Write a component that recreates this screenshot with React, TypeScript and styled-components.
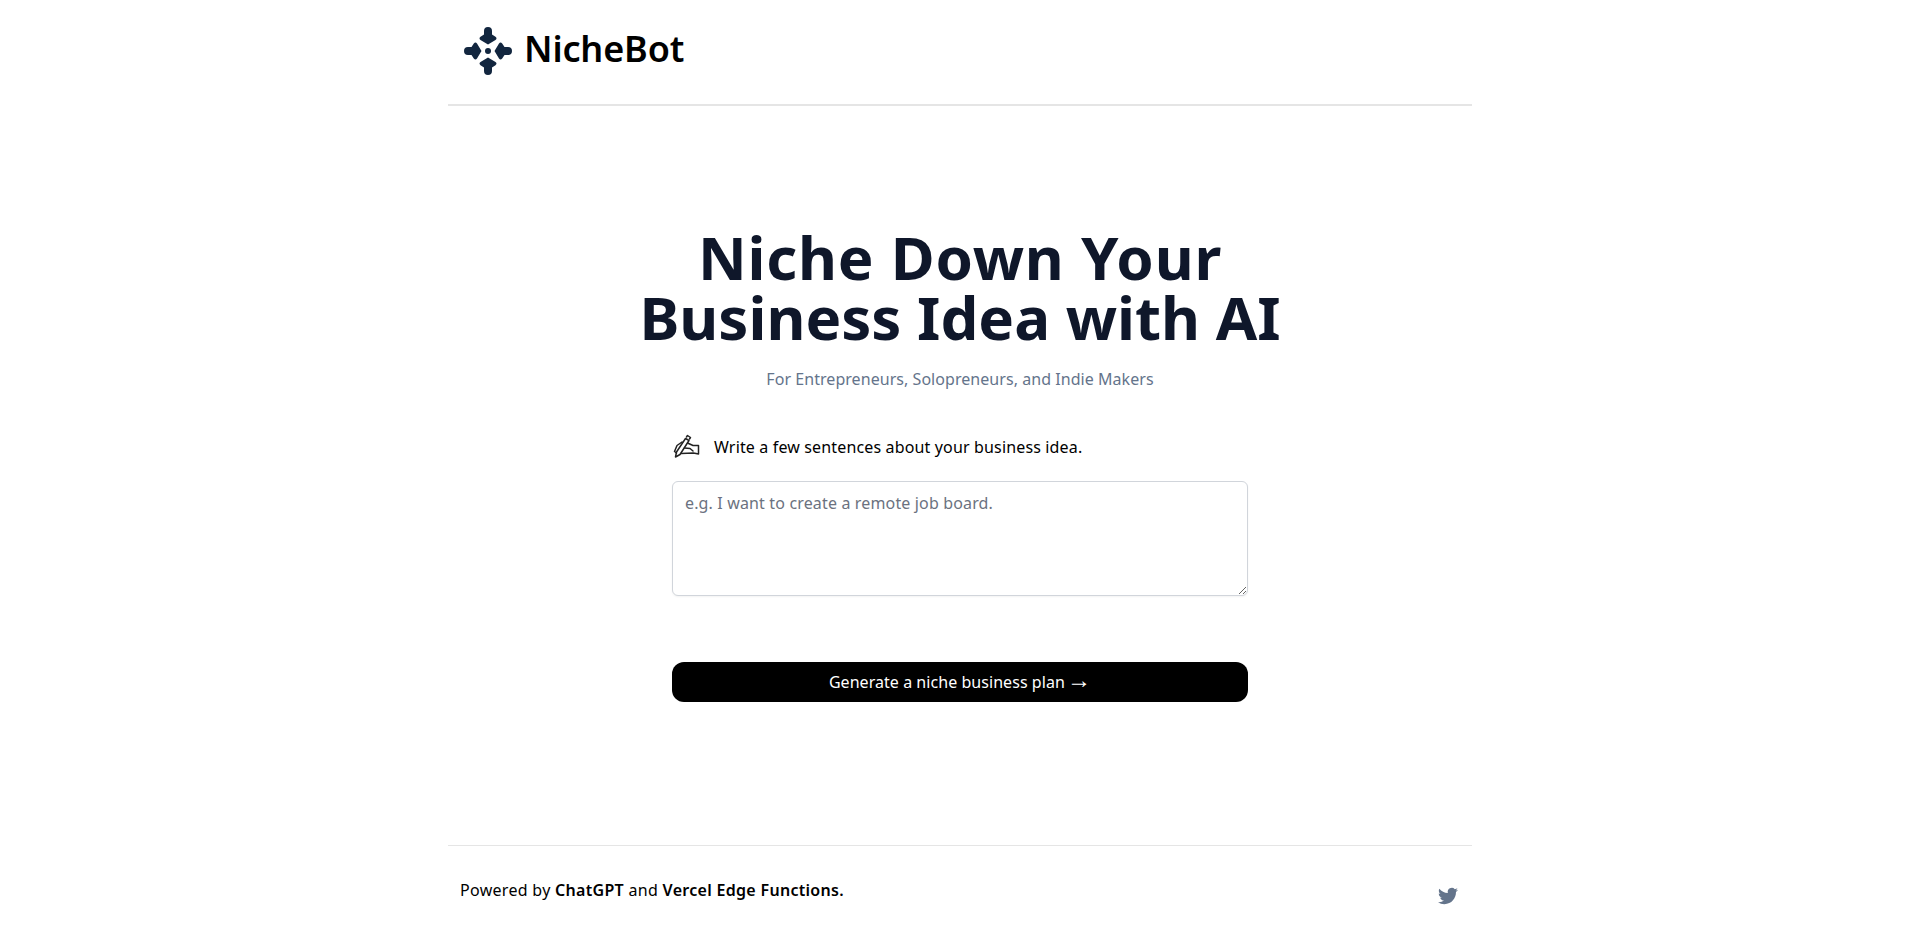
import styled, { createGlobalStyle } from "styled-components";

const GlobalStyle = createGlobalStyle`
    html, body {
        margin: 0;
        padding: 0;
        background: #fff;
    }
    body {
        font-family: "Noto Sans", "Open Sans", sans-serif;
    }
`

const Page = styled.div`
    width: 1024px;
    height: 933px;
    margin: 0 auto;
    display: flex;
    flex-direction: column;
`

const Header = styled.header`
    height: 104px;
    border-bottom: 2px solid #e5e5e5;
    padding: 0 16px;
    display: flex;
    align-items: center;
    gap: 12px;
    margin-bottom: 19px;
`

const LogoText = styled.h2`
    margin: 0;
    font-size: 36px;
    font-weight: 600;
    letter-spacing: -0.15px;
    color: #000;
    position: relative;
    top: -4px;
`

const LogoMark = styled.svg`
    width: 48px;
    height: 48px;
    position: relative;
    top: -1px;
`

const Main = styled.main`
    flex: 1;
    display: flex;
    flex-direction: column;
    align-items: center;
    padding-top: 102px;
`

const Title = styled.h1`
    margin: 0;
    font-size: 60px;
    line-height: 60px;
    font-weight: 700;
    color: #0f172a;
    text-align: center;
`

const WideLine = styled.span`
    letter-spacing: 0.8px;
`

const Subtitle = styled.p`
    margin: 20px 0 0;
    font-size: 16px;
    line-height: 24px;
    letter-spacing: 0.05px;
    color: #64748b;
`

const Form = styled.div`
    width: 576px;
    margin-top: 41px;
`

const StepRow = styled.div`
    display: flex;
    align-items: center;
    gap: 14px;
    height: 30px;
`

const StepIcon = styled.svg`
    width: 28px;
    height: 28px;
`

const StepLabel = styled.span`
    font-size: 16px;
    letter-spacing: 0.15px;
    color: #000;
`

const Area = styled.textarea`
    display: block;
    box-sizing: border-box;
    width: 100%;
    height: 115px;
    margin-top: 19px;
    padding: 9px 12px;
    border: 1px solid #d1d5db;
    border-radius: 6px;
    box-shadow: 0 1px 2px rgba(0, 0, 0, 0.05);
    font-family: inherit;
    font-size: 16px;
    line-height: 24px;
    letter-spacing: 0.15px;
    outline: none;
    &::placeholder {
        color: #6b7280;
        opacity: 1;
    }
`

const Submit = styled.button`
    display: block;
    width: 100%;
    height: 40px;
    margin-top: 66px;
    padding: 0 0 3px;
    border: none;
    border-radius: 12px;
    background: #000;
    color: #fff;
    font-family: inherit;
    font-size: 16px;
    font-weight: 400;
    letter-spacing: 0.05px;
`

const Arrow = styled.span`
    font-size: 24px;
    line-height: 20px;
    margin-left: -2px;
`

const Footer = styled.footer`
    height: 87px;
    border-top: 1px solid #e5e5e5;
    padding: 0 14px 0 12px;
    display: flex;
    justify-content: space-between;
    align-items: center;
`

const Credit = styled.p`
    margin: 0;
    font-size: 16px;
    letter-spacing: 0.3px;
    color: #000;
    b {
        font-weight: 600;
    }
`

const TwitterLink = styled.a`
    display: flex;
    color: #64748b;
    margin-top: 12px;
`

const petals = [0, 90, 180, 270];

export default function App() {
    return (
        <>
            <GlobalStyle />
            <Page>
                <Header>
                    <LogoMark viewBox="0 0 48 48" fill="#12263f">
                        <circle cx="24" cy="24" r="3" />
                        {petals.map((deg) => (
                            <path
                                key={deg}
                                transform={`rotate(${deg} 24 24)`}
                                d="M24 17.5 L16.5 13 Q14.5 11.5 16.5 9.8 L20 7.5 L20 4 Q20 0 24 0 Q28 0 28 4 L28 7.5 L31.5 9.8 Q33.5 11.5 31.5 13 Z"
                            />
                        ))}
                    </LogoMark>
                    <LogoText>NicheBot</LogoText>
                </Header>
                <Main>
                    <Title>
                        <WideLine>Niche Down Your</WideLine>
                        <br />
                        Business Idea with AI
                    </Title>
                    <Subtitle>For Entrepreneurs, Solopreneurs, and Indie Makers</Subtitle>
                    <Form>
                        <StepRow>
                            <StepIcon viewBox="0 0 28 28" fill="none" stroke="#222" strokeWidth="1.5" strokeLinejoin="round" strokeLinecap="round">
                                <path d="M3.5 24 L4.5 19 L13.5 5.5 L17 7.5 L8 21.5 Z" />
                                <path d="M14.5 4 L15.5 2.5 L18.5 4.5 L17.5 6" />
                                <path d="M10 9 L5 12.5 L2.5 18.5 L4.5 20" />
                                <path d="M15.5 10 L21 12.5 L26.5 12.5 L26.5 21 L21.5 20 L9 20.5" />
                                <path d="M12.5 15 L18 15.5 L21 18" />
                            </StepIcon>
                            <StepLabel>Write a few sentences about your business idea.</StepLabel>
                        </StepRow>
                        <Area rows={4} placeholder="e.g. I want to create a remote job board." />
                        <Submit>Generate a niche business plan <Arrow>→</Arrow></Submit>
                    </Form>
                </Main>
                <Footer>
                    <Credit>
                        Powered by <b>ChatGPT</b> and <b>Vercel Edge Functions.</b>
                    </Credit>
                    <TwitterLink href="#">
                        <svg width="20" height="20" viewBox="0 0 24 24" fill="currentColor">
                            <path d="M23.95 4.57a10 10 0 0 1-2.82.77 4.96 4.96 0 0 0 2.16-2.72c-.95.55-2 .95-3.12 1.18a4.92 4.92 0 0 0-8.38 4.48C7.69 8.1 4.07 6.13 1.64 3.16a4.82 4.82 0 0 0-.66 2.48c0 1.71.87 3.21 2.19 4.1a4.9 4.9 0 0 1-2.23-.61v.06c0 2.38 1.7 4.37 3.95 4.82a4.9 4.9 0 0 1-2.22.08 4.93 4.93 0 0 0 4.6 3.42A9.87 9.87 0 0 1 0 19.54a14 14 0 0 0 7.56 2.21c9.05 0 14-7.5 14-13.98 0-.21 0-.42-.02-.63a9.94 9.94 0 0 0 2.46-2.55z" />
                        </svg>
                    </TwitterLink>
                </Footer>
            </Page>
        </>
    )
}
